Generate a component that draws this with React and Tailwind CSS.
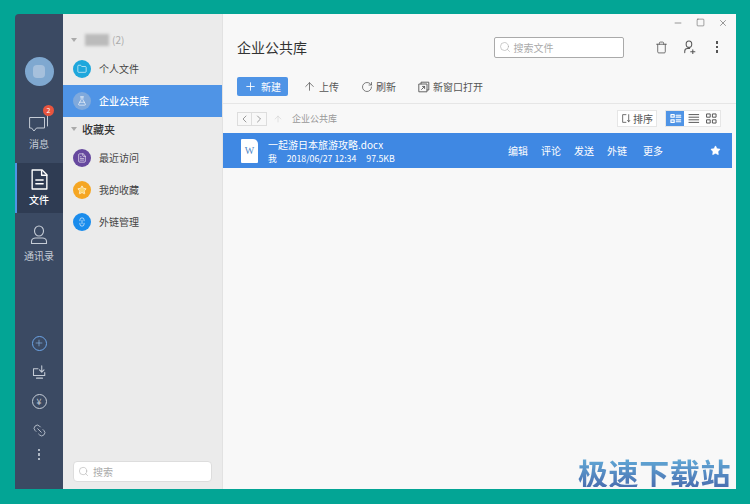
import { Plus, ArrowUp, RotateCw, ChevronLeft, ChevronRight, Search, Trash, Minus, Square, X, Star, Link2, Folder, FlaskConical, FileText } from "lucide-react";

const font = "font-['Noto_Sans_CJK_SC','Liberation_Sans',sans-serif]";

function NavRow({ color, icon, label, active }) {
  return (
    <div className={`flex h-8 items-center gap-2 pl-[10px] ${active ? "bg-[#4f94e6] font-medium text-white" : "text-[#444]"}`}>
      <div className={`flex h-[18px] w-[18px] items-center justify-center rounded-full ${color}`}>{icon}</div>
      <span className="text-[10px]">{label}</span>
    </div>
  );
}

function Tool({ icon, label }) {
  return (
    <div className="flex items-center gap-[3px] text-[10px] text-[#555]">
      {icon}
      <span>{label}</span>
    </div>
  );
}

function Dots({ className }) {
  return (
    <div className={`flex flex-col gap-[2px] ${className}`}>
      <span className="h-[2.5px] w-[2.5px] bg-current" />
      <span className="h-[2.5px] w-[2.5px] bg-current" />
      <span className="h-[2.5px] w-[2.5px] bg-current" />
    </div>
  );
}

function Icon({ size = 16, w = 1.2, children }) {
  return (
    <svg width={size} height={size} viewBox="0 0 20 20" fill="none" stroke="currentColor" strokeWidth={w} strokeLinecap="round" strokeLinejoin="round">
      {children}
    </svg>
  );
}

export default function App() {
  return (
    <div className={`relative flex h-[504px] w-[750px] bg-[#03a595] pb-[15px] pl-[15px] pr-[14px] pt-[14px] ${font}`}>
      {/* left rail */}
      <div className="flex w-[48px] shrink-0 flex-col items-center rounded-tl-sm bg-[#3b4a63] text-[#c5ccd6]">
        <div className="mt-[43px] flex h-[29px] w-[29px] items-center justify-center rounded-full bg-[#7fa8d0]">
          <div className="h-[13px] w-[12px] rounded-sm bg-[#a6c0dc]" />
        </div>
        <div className="relative mt-[27px] flex h-[44px] w-full flex-col items-center">
          <Icon size={20} w={1}>
            <path d="M1 4.500h14.500v10.500h-8l-2.500 3-2.500-3H1z" />
            <path d="M18.500 1v12" />
          </Icon>
          <div className="absolute left-[28px] top-[-8px] flex h-[11px] w-[11px] items-center justify-center rounded-full bg-[#e8553f] text-[7px] text-white">2</div>
          <span className="mt-[3px] text-[10px]">消息</span>
        </div>
        <div className="mt-[6px] flex h-[50px] w-full flex-col items-center border-l-2 border-[#4f94e6] bg-[#2f3c53] pr-[2px] pt-[6px] text-white">
          <Icon size={21} w={1.3}>
            <path d="M3 1h9.500L17 5.500V19H3z" />
            <path d="M12 1.500V6h5M6.500 10.500h7M6.500 14h7" />
          </Icon>
          <span className="mt-[2px] text-[10px] font-medium">文件</span>
        </div>
        <div className="mt-[12px] flex w-full flex-col items-center">
          <Icon size={20} w={1.1}>
            <ellipse cx="10" cy="6" rx="4.500" ry="5" />
            <path d="M2.500 18.500v-2c0-2 2-3.500 4-3.500h7c2 0 4 1.500 4 3.500v2z" />
          </Icon>
          <span className="mt-[3px] text-[10px]">通讯录</span>
        </div>
        <div className="mb-[29px] mt-auto flex flex-col items-center gap-[14px]">
          <div className="flex h-[15px] w-[15px] items-center justify-center rounded-full border border-[#6da5e8] text-[#8fbdf0]">
            <Plus size={10} strokeWidth={1.5} />
          </div>
          <Icon size={15} w={1.4}>
            <path d="M8 5H2v9h15v-4M6 17.500h8" />
            <path d="M13 1v8M10 6.500l3 3 3-3" />
          </Icon>
          <div className="flex h-[15px] w-[15px] items-center justify-center rounded-full border border-[#c5ccd6] text-[9px] leading-none">¥</div>
          <Link2 size={15} strokeWidth={1.3} className="rotate-45" />
          <Dots className="-mt-[3px] text-[#aeb7c4]" />
        </div>
      </div>

      {/* list panel */}
      <div className="flex w-[159px] shrink-0 flex-col bg-[#ebebeb]">
        <div className="flex h-[38.5px] items-end gap-[5px] pb-[6px] pl-[8px] text-[10px] text-[#aaa]">
          <span className="mb-[5px] h-0 w-0 border-x-[3px] border-t-[4px] border-x-transparent border-t-[#aaa]" />
          <span className="mb-[1px] ml-[3px] h-[12px] w-[24px] bg-[#bbb] blur-[1.5px]" />
          <span className="-ml-[2px]">(2)</span>
        </div>
        <NavRow color="bg-[#1ea7dc]" icon={<Folder size={10} color="#fff" strokeWidth={1.5} />} label="个人文件" />
        <NavRow active color="bg-[#7fa9dc]" icon={<FlaskConical size={10} color="#fff" strokeWidth={1.5} />} label="企业公共库" />
        <div className="flex h-[25px] items-center gap-[5px] pl-[8px] text-[11px] font-medium text-[#333]">
          <span className="h-0 w-0 border-x-[3px] border-t-[4px] border-x-transparent border-t-[#aaa]" />
          收藏夹
        </div>
        <NavRow color="bg-[#66489e]" icon={<FileText size={10} color="#fff" strokeWidth={1.5} />} label="最近访问" />
        <NavRow color="bg-[#f5a623]" icon={<Star size={10} color="#fff" fill="#fbd36b" strokeWidth={1.5} />} label="我的收藏" />
        <NavRow color="bg-[#1a8cec]" icon={<Link2 size={10} color="#fff" strokeWidth={1.5} className="rotate-90" />} label="外链管理" />
        <div className="mx-[10px] mb-[7px] mt-auto flex h-[21px] items-center gap-[4px] rounded-sm border border-[#ddd] bg-white pl-[4px] text-[10px] text-[#aaa]">
          <Search size={11} strokeWidth={1.2} />
          搜索
        </div>
      </div>

      {/* main */}
      <div className="flex min-w-0 flex-1 flex-col border-l border-[#e2e2e2] bg-[#f8f8f8]">
        <div className="flex h-[17px] items-center justify-end gap-[13px] pr-[8px] text-[#444]">
          <Minus size={10} strokeWidth={1.3} />
          <Square size={9} strokeWidth={1.3} />
          <X size={10} strokeWidth={1.3} />
        </div>
        <div className="flex h-[34px] items-center pb-[2px] pl-[14px] pr-[18px]">
          <span className="text-[14px] text-[#333]">企业公共库</span>
          <div className="ml-auto mr-[31px] flex h-[21px] w-[130px] items-center gap-[3px] rounded-[2px] border border-[#aaa] bg-white pl-[4px] text-[10px] text-[#aaa]">
            <Search size={12} strokeWidth={1.2} />
            搜索文件
          </div>
          <div className="flex items-center text-[#555]">
            <Trash size={13} strokeWidth={1.5} />
            <div className="ml-[15px]">
              <Icon size={14} w={1.5}>
                <ellipse cx="8.500" cy="6" rx="4" ry="4.500" />
                <path d="M2.500 18v-2c0-2.500 2-4 4-4h3M14 14v5.500M11 16.800h6" />
              </Icon>
            </div>
            <Dots className="ml-[19px]" />
          </div>
        </div>
        <div className="flex items-center gap-[22px] border-b border-[#e6e6e6] pb-[7px] pl-[14px] pt-[12px]">
          <div className="flex h-[19px] w-[51px] items-center justify-center gap-[4px] rounded-[2px] bg-[#4f94e6] text-[10px] text-white">
            <Plus size={13} strokeWidth={1.6} />
            新建
          </div>
          <div className="-ml-[7px]">
            <Tool icon={<ArrowUp size={13} strokeWidth={1.4} />} label="上传" />
          </div>
          <Tool icon={<RotateCw size={12} strokeWidth={1.5} />} label="刷新" />
          <Tool
            icon={
              <Icon size={12} w={1.5}>
                <path d="M5 5V2h13v13h-3M2 5h13v13H2z" />
                <path d="M6 14l5-5M7.500 9H11v3.500" />
              </Icon>
            }
            label="新窗口打开"
          />
        </div>
        <div className="flex h-[29px] items-center pl-[14px] pr-[15px]">
          <div className="flex h-[14px] border border-[#ddd] text-[#666]">
            <ChevronLeft size={12} strokeWidth={1.3} className="w-[14px] border-r border-[#ddd]" />
            <ChevronRight size={12} strokeWidth={1.3} className="w-[14px]" />
          </div>
          <ArrowUp size={10} strokeWidth={1.3} className="ml-[6px] text-[#ccc]" />
          <span className="ml-[9px] text-[9px] text-[#999]">企业公共库</span>
          <div className="ml-auto flex h-[17px] w-[40px] items-center justify-center gap-[1px] border border-[#e6e6e6] bg-white text-[10px] text-[#555]">
            <Icon size={11} w={1.5}>
              <path d="M9 3H3v14h6M14 3v13M12 13.500l2 2.500 2-2.500" />
            </Icon>
            排序
          </div>
          <div className="ml-[8px] flex h-[17px] border border-[#e6e6e6] bg-white text-[#555]">
            <div className="flex w-[18px] items-center justify-center bg-[#4f94e6] text-white">
              <Icon size={13} w={1.8}>
                <path d="M3 4h5v4H3zM3 12h5v4H3zM11 5h7M11 8h7M11 12h7M11 15h7" />
              </Icon>
            </div>
            <div className="flex w-[18px] items-center justify-center">
              <Icon size={13} w={1.5}>
                <path d="M3 4h15M3 8h15M3 12h15M3 16h15" />
              </Icon>
            </div>
            <div className="flex w-[18px] items-center justify-center">
              <Icon size={13} w={1.5}>
                <path d="M3 3h5v5H3zM12 3h5v5h-5zM3 12h5v5H3zM12 12h5v5h-5z" />
              </Icon>
            </div>
          </div>
        </div>
        <div className="mr-[4px] flex h-[35px] items-center bg-[#3f88e3] pl-[18px] pr-[11px] text-white">
          <div className="flex h-[24px] w-[17px] items-center justify-center rounded-[1px] rounded-tr-[5px] bg-white font-['Liberation_Serif',serif] text-[10px] text-[#4f86c6]">W</div>
          <div className="ml-[10px]">
            <div className="text-[10px] leading-[15px]">一起游日本旅游攻略.docx</div>
            <div className="flex gap-[10px] text-[8.75px] leading-[13px]">
              <span>我</span>
              <span>2018/06/27 12:34</span>
              <span>97.5KB</span>
            </div>
          </div>
          <div className="ml-auto flex gap-[13px] text-[10px]">
            <span>编辑</span>
            <span>评论</span>
            <span>发送</span>
            <span>外链</span>
            <span className="ml-[3px]">更多</span>
          </div>
          <Star size={11} fill="#fff" strokeWidth={1} className="ml-[47px]" />
        </div>
      </div>

      {/* watermark */}
      <div className="absolute bottom-[17px] right-[19px] bg-gradient-to-b from-[#62acd8] to-[#4a6fb0] bg-clip-text text-[30px] font-bold leading-none tracking-[0.6px] text-transparent">极速下载站</div>
    </div>
  );
}
